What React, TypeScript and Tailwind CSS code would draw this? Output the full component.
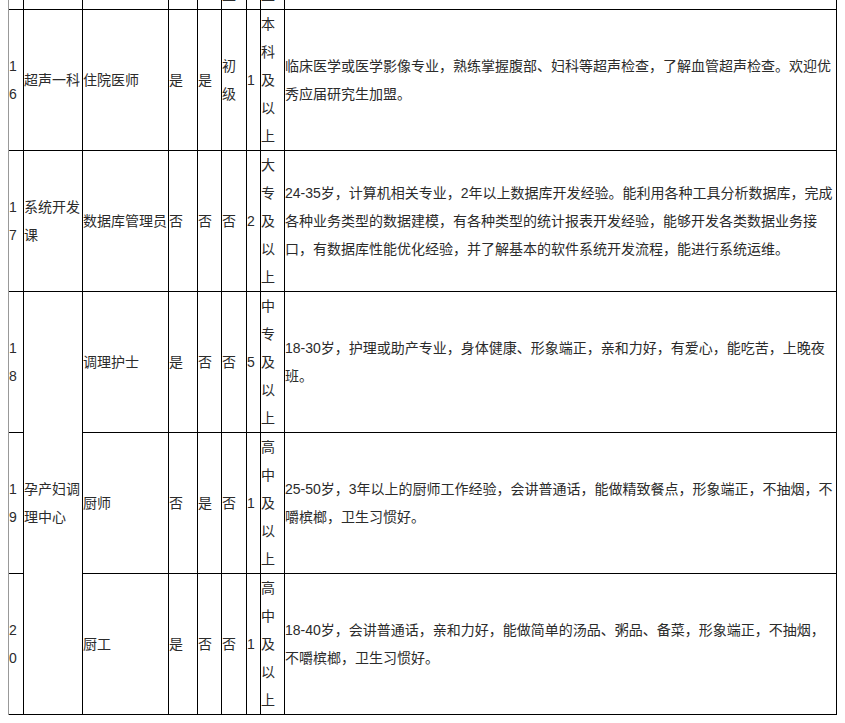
import React from "react"

type Row = {
	no: string
	dept?: { text: string[]; span: number } | null
	title: string[]
	a: string
	b: string
	level: string[]
	count: string
	edu: string[]
	desc: string[]
}

// row 15 is only seen by its last few pixels, so it keeps just the stacked columns
const rows: Row[] = [
	{
		no: "",
		dept: { text: [], span: 1 },
		title: [],
		a: "",
		b: "",
		level: ["中", "级", "及", "以", "上"],
		count: "",
		edu: ["本", "科", "及", "以", "上"],
		desc: [],
	},
	{
		no: "16",
		dept: { text: ["超声一科"], span: 1 },
		title: ["住院医师"],
		a: "是",
		b: "是",
		level: ["初", "级"],
		count: "1",
		edu: ["本", "科", "及", "以", "上"],
		desc: [
			"临床医学或医学影像专业，熟练掌握腹部、妇科等超声检查，了解血管超声检查。欢迎优",
			"秀应届研究生加盟。",
		],
	},
	{
		no: "17",
		dept: { text: ["系统开发", "课"], span: 1 },
		title: ["数据库管理员"],
		a: "否",
		b: "否",
		level: ["否"],
		count: "2",
		edu: ["大", "专", "及", "以", "上"],
		desc: [
			"24-35岁，计算机相关专业，2年以上数据库开发经验。能利用各种工具分析数据库，完成",
			"各种业务类型的数据建模，有各种类型的统计报表开发经验，能够开发各类数据业务接",
			"口，有数据库性能优化经验，并了解基本的软件系统开发流程，能进行系统运维。",
		],
	},
	{
		no: "18",
		dept: { text: ["孕产妇调", "理中心"], span: 3 },
		title: ["调理护士"],
		a: "是",
		b: "否",
		level: ["否"],
		count: "5",
		edu: ["中", "专", "及", "以", "上"],
		desc: [
			"18-30岁，护理或助产专业，身体健康、形象端正，亲和力好，有爱心，能吃苦，上晚夜",
			"班。",
		],
	},
	{
		no: "19",
		dept: null,
		title: ["厨师"],
		a: "否",
		b: "是",
		level: ["否"],
		count: "1",
		edu: ["高", "中", "及", "以", "上"],
		desc: [
			"25-50岁，3年以上的厨师工作经验，会讲普通话，能做精致餐点，形象端正，不抽烟，不",
			"嚼槟榔，卫生习惯好。",
		],
	},
	{
		no: "20",
		dept: null,
		title: ["厨工"],
		a: "是",
		b: "否",
		level: ["否"],
		count: "1",
		edu: ["高", "中", "及", "以", "上"],
		desc: [
			"18-40岁，会讲普通话，亲和力好，能做简单的汤品、粥品、备菜，形象端正，不抽烟，",
			"不嚼槟榔，卫生习惯好。",
		],
	},
]

function Cell({ lines, className = "" }: { lines: string[]; className?: string }) {
	return (
		<div
			className={`flex flex-col justify-center overflow-hidden border-r border-b border-black ${className}`}
		>
			{lines.map((l, i) => (
				<div key={i} className="whitespace-nowrap">
					{l}
				</div>
			))}
		</div>
	)
}

export default function App() {
	return (
		<div
			className="h-[723px] overflow-hidden bg-white text-[14px] leading-[28px] text-[#2b2b2b]"
			style={{ fontFamily: '"Liberation Sans", "Noto Sans CJK SC", sans-serif' }}
		>
			<div className="-mt-[131px] ml-2 grid w-fit auto-rows-[141px] grid-cols-[15px_59px_86px_29px_24px_25px_14px_24px_552px] border-l border-[#999]">
				{rows.map((r, i) => (
					<React.Fragment key={i}>
						<Cell lines={r.no.split("")} />
						{r.dept && (
							<Cell
								lines={r.dept.text}
								className={r.dept.span === 3 ? "row-span-3" : ""}
							/>
						)}
						<Cell lines={r.title} />
						<Cell lines={[r.a]} />
						<Cell lines={[r.b]} />
						<Cell lines={r.level} />
						<Cell lines={[r.count]} />
						<Cell lines={r.edu} />
						<Cell lines={r.desc} />
					</React.Fragment>
				))}
			</div>
		</div>
	)
}
